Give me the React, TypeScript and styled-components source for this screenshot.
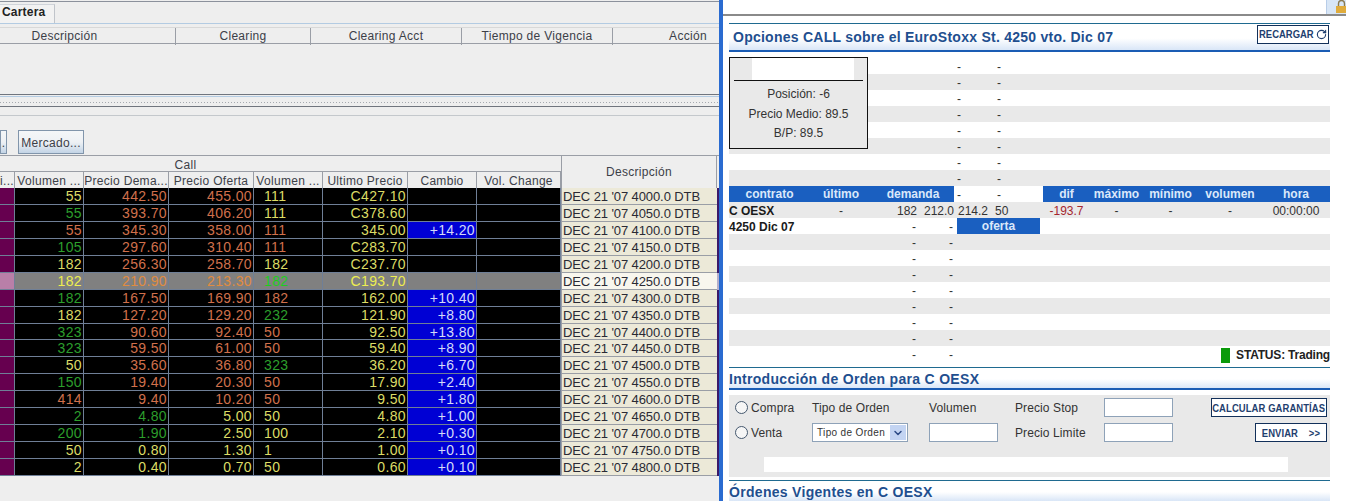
import { FC } from "react";
import styled, { createGlobalStyle } from "styled-components";
import { ChevronDown, RotateCw } from "lucide-react";

const GlobalStyle = createGlobalStyle`
  html, body {
    margin: 0;
    padding: 0;
    background: #ffffff;
    overflow: hidden;
  }
  * {
    box-sizing: border-box;
  }
`;

const COLORS = {
  y: "#dcdc66",
  g: "#2c9e2c",
  o: "#d0704c",
};

const SELECTED_COLORS = {
  y: "#eeee50",
  g: "#1ecc1e",
  o: "#e08c40",
};

type Tone = keyof typeof COLORS;

type Quote = {
  bidVol: [string, Tone];
  bid: [string, Tone];
  ask: [string, Tone];
  askVol: [string, Tone];
  last: string;
  change?: string;
  strike: string;
  selected?: boolean;
};

const quotes: Quote[] = [
  { bidVol: ["55", "y"], bid: ["442.50", "o"], ask: ["455.00", "o"], askVol: ["111", "y"], last: "C427.10", strike: "4000.0" },
  { bidVol: ["55", "g"], bid: ["393.70", "o"], ask: ["406.20", "o"], askVol: ["111", "y"], last: "C378.60", strike: "4050.0" },
  { bidVol: ["55", "o"], bid: ["345.30", "o"], ask: ["358.00", "o"], askVol: ["111", "o"], last: "345.00", change: "+14.20", strike: "4100.0" },
  { bidVol: ["105", "g"], bid: ["297.60", "o"], ask: ["310.40", "o"], askVol: ["111", "o"], last: "C283.70", strike: "4150.0" },
  { bidVol: ["182", "y"], bid: ["256.30", "o"], ask: ["258.70", "o"], askVol: ["182", "y"], last: "C237.70", strike: "4200.0" },
  { bidVol: ["182", "y"], bid: ["210.90", "o"], ask: ["213.30", "o"], askVol: ["182", "g"], last: "C193.70", strike: "4250.0", selected: true },
  { bidVol: ["182", "g"], bid: ["167.50", "o"], ask: ["169.90", "o"], askVol: ["182", "o"], last: "162.00", change: "+10.40", strike: "4300.0" },
  { bidVol: ["182", "y"], bid: ["127.20", "o"], ask: ["129.20", "o"], askVol: ["232", "g"], last: "121.90", change: "+8.80", strike: "4350.0" },
  { bidVol: ["323", "g"], bid: ["90.60", "o"], ask: ["92.40", "o"], askVol: ["50", "o"], last: "92.50", change: "+13.80", strike: "4400.0" },
  { bidVol: ["323", "g"], bid: ["59.50", "o"], ask: ["61.00", "o"], askVol: ["50", "o"], last: "59.40", change: "+8.90", strike: "4450.0" },
  { bidVol: ["50", "y"], bid: ["35.60", "o"], ask: ["36.80", "o"], askVol: ["323", "g"], last: "36.20", change: "+6.70", strike: "4500.0" },
  { bidVol: ["150", "g"], bid: ["19.40", "o"], ask: ["20.30", "o"], askVol: ["50", "o"], last: "17.90", change: "+2.40", strike: "4550.0" },
  { bidVol: ["414", "o"], bid: ["9.40", "o"], ask: ["10.20", "o"], askVol: ["50", "o"], last: "9.50", change: "+1.80", strike: "4600.0" },
  { bidVol: ["2", "g"], bid: ["4.80", "g"], ask: ["5.00", "y"], askVol: ["50", "y"], last: "4.80", change: "+1.00", strike: "4650.0" },
  { bidVol: ["200", "g"], bid: ["1.90", "g"], ask: ["2.50", "y"], askVol: ["100", "y"], last: "2.10", change: "+0.30", strike: "4700.0" },
  { bidVol: ["50", "y"], bid: ["0.80", "y"], ask: ["1.30", "y"], askVol: ["1", "y"], last: "1.00", change: "+0.10", strike: "4750.0" },
  { bidVol: ["2", "y"], bid: ["0.40", "y"], ask: ["0.70", "y"], askVol: ["50", "y"], last: "0.60", change: "+0.10", strike: "4800.0" },
];

const toneOf = (q: Quote, tone: Tone) =>
  q.selected ? SELECTED_COLORS[tone] : COLORS[tone];

const TABLE_COLUMNS = "15px 69px 85px 85px 69px 85px 69px 84px 156px 2px";

const Page = styled.div`
  width: 1346px;
  height: 501px;
  display: flex;
  overflow: hidden;
  font-family: "Liberation Sans", Arial, sans-serif;
`;

/* left: java client */

const JavaPane = styled.div`
  width: 719px;
  height: 501px;
  flex: none;
  background: #eeeeee;
  color: #3c4048;
  display: flex;
  flex-direction: column;
`;

const TabStrip = styled.div`
  height: 23px;
  margin-top: 1px;
  padding-top: 2px;
  border-top: 1px solid #8b919c;
  border-bottom: 1px solid #b3cbe2;
  display: flex;
  align-items: flex-end;
`;

const Tab = styled.div`
  width: 55px;
  height: 19px;
  padding: 0 0 0 2px;
  font-size: 12px;
  font-weight: bold;
  letter-spacing: 0.2px;
  color: #222222;
  border-right: 1px solid #c0c4ca;
  border-top: 1px solid #d0d4da;
  background: #f2f2f2;
`;

const OrderHeader = styled.div`
  margin-top: 3px;
  height: 17px;
  display: grid;
  grid-template-columns: 176px 135px 151px 151px 106px;
  border-top: 1px solid #d8d8d8;
  border-bottom: 1px solid #9a9ea6;
`;

const OrderHeaderCell = styled.div<{ $padLeft?: number; $padRight?: number }>`
  font-size: 12px;
  letter-spacing: 0.3px;
  line-height: 17px;
  text-align: center;
  border-right: 1px solid #9a9ea6;
  padding-left: ${(props) => (props.$padLeft ?? 0) + "px"};
  padding-right: ${(props) => (props.$padRight ?? 0) + "px"};

  &:last-child {
    border-right: none;
  }
`;

const EmptyOrders = styled.div`
  height: 51px;
  border-bottom: 1px solid #70757e;
`;

const Splitter = styled.div`
  height: 11px;
  margin-top: 1px;
  border-top: 1px solid #b3cbe2;
  border-bottom: 1px solid #70757e;
  display: flex;
  align-items: center;
`;

const SplitterDots = styled.div`
  width: 100%;
  height: 1px;
  margin-top: 1px;
  background: repeating-linear-gradient(90deg, #a6aab0 0 1px, transparent 1px 3px);
`;

const ThinRule = styled.div`
  height: 1px;
  margin-top: 8px;
  background: #c4c8cc;
`;

const ButtonBar = styled.div`
  height: 40px;
  padding-top: 14px;
  border-bottom: 1px solid #9a9ea6;
  display: flex;
  gap: 11px;
`;

const JavaButton = styled.div<{ width: number }>`
  width: ${(props) => props.width + "px"};
  height: 24px;
  font-size: 12px;
  letter-spacing: 0.3px;
  line-height: 24px;
  text-align: center;
  white-space: nowrap;
  overflow: hidden;
  color: #3c4048;
  border: 1px solid #8195ab;
  background: linear-gradient(#f4f6f8 0%, #eef1f4 50%, #c3d4e6 100%);
`;

const QuoteTable = styled.div`
  display: flex;
  flex-direction: column;
`;

const HeaderGrid = styled.div`
  height: 32px;
  display: grid;
  grid-template-columns: ${TABLE_COLUMNS};
  grid-template-rows: 16px 16px;
`;

const CallHeader = styled.div`
  grid-column: 1 / 9;
  grid-row: 1;
  font-size: 12px;
  letter-spacing: 0.3px;
  line-height: 18px;
  text-align: center;
  padding-right: 190px;
  border-bottom: 1px solid #9a9ea6;
`;

const ColumnHead = styled.div`
  grid-row: 2;
  font-size: 12px;
  letter-spacing: 0.3px;
  line-height: 18px;
  text-align: center;
  white-space: nowrap;
  overflow: hidden;
  border-right: 1px solid #9a9ea6;
`;

const DescriptionHead = styled.div`
  grid-column: 9;
  grid-row: 1 / 3;
  font-size: 12px;
  letter-spacing: 0.3px;
  line-height: 33px;
  text-align: center;
  border-left: 1px solid #9a9ea6;
  border-right: 1px solid #9a9ea6;
`;

const QuoteBody = styled.div`
  height: 288px;
  display: grid;
  grid-template-rows: repeat(17, 1fr);
`;

const QuoteRow = styled.div`
  display: grid;
  grid-template-columns: ${TABLE_COLUMNS};
  min-height: 0;
`;

const Cell = styled.div<{ $selected?: boolean }>`
  background: ${(props) => (props.$selected ? "#808080" : "#000000")};
  border-right: 1px solid #6f7f97;
  border-bottom: 1px solid #6f7f97;
  font-size: 14px;
  line-height: 17px;
  letter-spacing: 0.35px;
  min-width: 0;
  overflow: hidden;
  white-space: nowrap;
`;

const NumberCell = styled(Cell)<{ tone: string }>`
  color: ${(props) => props.tone};
  text-align: right;
  padding-right: 1px;
`;

const LeftNumberCell = styled(Cell)<{ tone: string }>`
  color: ${(props) => props.tone};
  padding-left: 10px;
`;

const MarkerCell = styled(Cell)`
  background: ${(props) => (props.$selected ? "#b97fa8" : "#66004f")};
`;

const ChangeCell = styled(Cell)<{ $active: boolean }>`
  background: ${(props) =>
    props.$active ? "#0000d4" : props.$selected ? "#808080" : "#000000"};
  color: #d4daf8;
  text-align: right;
  padding-right: 1px;
`;

const DescriptionCell = styled.div<{ $selected?: boolean }>`
  background: ${(props) => (props.$selected ? "#f8f6ee" : "#ece9d8")};
  color: #2a2a34;
  font-size: 13px;
  line-height: 17px;
  letter-spacing: -0.1px;
  padding-left: 1px;
  border-left: 1px solid #9a9ea6;
  border-bottom: 1px solid #9a9ea6;
  white-space: nowrap;
  overflow: hidden;
`;

const EdgeCell = styled.div<{ $selected?: boolean }>`
  background: ${(props) => (props.$selected ? "#b4aecb" : "#3b1a6a")};
`;

const PaneDivider = styled.div`
  width: 4px;
  flex: none;
  background: #2a6bd0;
`;

/* right: web frame */

const WebPane = styled.div`
  flex: 1;
  height: 501px;
  background: #ffffff;
  position: relative;
  color: #222222;
  font-size: 12px;
`;

const TopStrip = styled.div`
  height: 16px;
  display: flex;
  border-bottom: 2px solid #8a8a8a;
`;

const TopField = styled.div`
  flex: 1;
  background: #ffffff;
`;

const LockSlot = styled.div`
  width: 20px;
  padding-left: 9px;
  background: #d8e6f6;
  border-left: 1px solid #b8cde8;
`;

const WebBody = styled.div`
  margin-left: 6px;
  width: 601px;
  display: flex;
  flex-direction: column;
`;

const SectionHead = styled.div<{ top: number; height: number }>`
  margin-top: ${(props) => props.top + "px"};
  height: ${(props) => props.height + "px"};
  border-top: 1px solid #1f6a90;
  background: linear-gradient(#ffffff 55%, #d9e6f7 100%);
  display: flex;
  align-items: center;
  justify-content: space-between;
`;

const BlueRule = styled.div`
  height: 2px;
  background: #1a5cb4;
`;

const SectionTitle = styled.h2<{ indent: number; spacing: number; drop?: number }>`
  margin: 0;
  padding-left: ${(props) => props.indent + "px"};
  padding-top: ${(props) => (props.drop ?? 0) + "px"};
  font-size: 14px;
  font-weight: bold;
  letter-spacing: ${(props) => props.spacing + "px"};
  color: #1f4f8f;
  white-space: nowrap;
`;

const OutlineButton = styled.div<{ width: number; height: number }>`
  width: ${(props) => props.width + "px"};
  height: ${(props) => props.height + "px"};
  flex: none;
  background: #ffffff;
  border: 1px solid #12305a;
  color: #1f3f6f;
  font-size: 11px;
  font-weight: bold;
  display: flex;
  align-items: center;
  justify-content: center;
  gap: 2px;
  white-space: nowrap;
`;

const NarrowLabel = styled.span`
  display: inline-block;
  transform: scaleX(0.86);
`;

const ReloadLabel = styled(NarrowLabel)`
  transform-origin: left center;
  margin-right: -8px;
`;

const ReloadButton = styled(OutlineButton)`
  margin: 0 1px 6px 0;
`;

const MarketTable = styled.div`
  margin-top: 6px;
  position: relative;
  display: flex;
  flex-direction: column;
`;

const MarketRow = styled.div<{ $shaded: boolean }>`
  height: 16px;
  display: grid;
  grid-template-columns: 81px 62px 46px 36px 36px 53px 47px 53px 55px 64px 68px;
  background: ${(props) => (props.$shaded ? "#e9e9e9" : "transparent")};
  line-height: 18px;
  color: #333333;
  white-space: nowrap;
`;

const Val = styled.div<{ align: "left" | "center" | "right"; col: number; pad?: number }>`
  grid-column: ${(props) => props.col};
  text-align: ${(props) => props.align};
  padding-left: ${(props) => (props.align === "left" ? props.pad ?? 0 : 0) + "px"};
  padding-right: ${(props) => (props.align === "right" ? props.pad ?? 0 : 0) + "px"};
`;

const RedVal = styled(Val)`
  color: #a5262e;
`;

const BoldVal = styled(Val)`
  font-weight: bold;
  color: #1a1a1a;
`;

const BlueHead = styled.div<{ col: string }>`
  grid-column: ${(props) => props.col};
  background: #1a5fc0;
  color: #dbe8fa;
  font-weight: bold;
  text-align: center;
  line-height: 16px;
`;

const OfferHead = styled(BlueHead)`
  margin: 0 3px;
`;

const Status = styled.div`
  grid-column: 8 / -1;
  display: flex;
  justify-content: flex-end;
  align-items: center;
  gap: 6px;
  font-weight: bold;
  letter-spacing: -0.2px;
  color: #222222;
`;

const StatusLight = styled.span`
  width: 9px;
  height: 15px;
  background: #0a9a0a;
`;

const PositionBox = styled.div`
  position: absolute;
  left: 0;
  top: -1px;
  width: 139px;
  height: 92px;
  background: #e9e9e9;
  border: 1px solid #111111;
  padding: 0 4px;
  text-align: center;
  color: #333333;
`;

const PositionBlank = styled.div`
  height: 22px;
  margin: 0 9px 0 18px;
  background: #ffffff;
`;

const PositionRule = styled.div`
  height: 1px;
  background: #111111;
  margin-bottom: 4px;
`;

const PositionLine = styled.div`
  line-height: 19.5px;
`;

const OrderForm = styled.div`
  margin-top: 5px;
  height: 82px;
  background: #e9e9e9;
  display: flex;
  flex-direction: column;
`;

const FormRow = styled.div`
  height: 25px;
  display: grid;
  grid-template-columns: 83px 117px 86px 89px 107px 1fr;
  align-items: center;
  color: #333333;
  letter-spacing: 0.1px;
  white-space: nowrap;
`;

const RadioLabel = styled.label`
  display: flex;
  align-items: center;
  gap: 3px;
  padding-left: 6px;
`;

const Radio = styled.input.attrs({ type: "radio" })`
  appearance: none;
  width: 13px;
  height: 13px;
  margin: 0;
  border: 1px solid #45586e;
  border-radius: 50%;
  background: #f6f6f6;
`;

const TextField = styled.input.attrs({ type: "text" })`
  width: 69px;
  height: 19px;
  padding: 0;
  border: 1px solid #8ea2b8;
  background: #ffffff;
`;

const FakeSelect = styled.div`
  width: 96px;
  height: 19px;
  border: 1px solid #8ea2b8;
  background: #ffffff;
  display: flex;
  align-items: center;
  justify-content: space-between;
  font-size: 10px;
  letter-spacing: 0.35px;
  padding: 0 1px 0 4px;
  color: #333333;
`;

const SelectArrow = styled.span`
  width: 16px;
  height: 15px;
  display: flex;
  align-items: center;
  justify-content: center;
  background: #c3d4f2;
  color: #2c4a86;
`;

const ActionCell = styled.div`
  display: flex;
  justify-content: flex-end;
  padding-right: 3px;
`;

const MessageBand = styled.div`
  margin: 12px 42px 0 35px;
  height: 15px;
  background: #ffffff;
`;

const OptionHeadRow: FC = () => (
  <MarketRow $shaded={false}>
    <BlueHead col="1">contrato</BlueHead>
    <BlueHead col="2">último</BlueHead>
    <BlueHead col="3 / 5">demanda</BlueHead>
    <Val align="left" col={5} pad={3}>-</Val>
    <Val align="left" col={6} pad={7}>-</Val>
    <BlueHead col="7">dif</BlueHead>
    <BlueHead col="8">máximo</BlueHead>
    <BlueHead col="9">mínimo</BlueHead>
    <BlueHead col="10">volumen</BlueHead>
    <BlueHead col="11">hora</BlueHead>
  </MarketRow>
);

const App: FC = () => {
  const topRows = [0, 1, 2, 3, 4, 5, 6, 7];
  const lowerRows = [11, 12, 13, 14, 15, 16, 17];

  return (
    <Page>
      <GlobalStyle />
      <JavaPane>
        <TabStrip>
          <Tab>Cartera</Tab>
        </TabStrip>
        <OrderHeader>
          <OrderHeaderCell $padRight={46}>Descripción</OrderHeaderCell>
          <OrderHeaderCell>Clearing</OrderHeaderCell>
          <OrderHeaderCell>Clearing Acct</OrderHeaderCell>
          <OrderHeaderCell>Tiempo de Vigencia</OrderHeaderCell>
          <OrderHeaderCell $padLeft={44}>Acción</OrderHeaderCell>
        </OrderHeader>
        <EmptyOrders />
        <Splitter>
          <SplitterDots />
        </Splitter>
        <ThinRule />
        <ButtonBar>
          <JavaButton width={7}>.</JavaButton>
          <JavaButton width={66}>Mercado...</JavaButton>
        </ButtonBar>
        <QuoteTable>
          <HeaderGrid>
            <CallHeader>Call</CallHeader>
            <ColumnHead>i...</ColumnHead>
            <ColumnHead>Volumen ...</ColumnHead>
            <ColumnHead>Precio Dema...</ColumnHead>
            <ColumnHead>Precio Oferta</ColumnHead>
            <ColumnHead>Volumen ...</ColumnHead>
            <ColumnHead>Ultimo Precio</ColumnHead>
            <ColumnHead>Cambio</ColumnHead>
            <ColumnHead>Vol. Change</ColumnHead>
            <DescriptionHead>Descripción</DescriptionHead>
          </HeaderGrid>
          <QuoteBody>
            {quotes.map((q) => (
              <QuoteRow key={q.strike}>
                <MarkerCell $selected={q.selected} />
                <NumberCell $selected={q.selected} tone={toneOf(q, q.bidVol[1])}>{q.bidVol[0]}</NumberCell>
                <NumberCell $selected={q.selected} tone={toneOf(q, q.bid[1])}>{q.bid[0]}</NumberCell>
                <NumberCell $selected={q.selected} tone={toneOf(q, q.ask[1])}>{q.ask[0]}</NumberCell>
                <LeftNumberCell $selected={q.selected} tone={toneOf(q, q.askVol[1])}>{q.askVol[0]}</LeftNumberCell>
                <NumberCell $selected={q.selected} tone={toneOf(q, "y")}>{q.last}</NumberCell>
                <ChangeCell $selected={q.selected} $active={!!q.change}>{q.change}</ChangeCell>
                <Cell $selected={q.selected} />
                <DescriptionCell $selected={q.selected}>DEC 21 '07 {q.strike} DTB</DescriptionCell>
                <EdgeCell $selected={q.selected} />
              </QuoteRow>
            ))}
          </QuoteBody>
        </QuoteTable>
      </JavaPane>
      <PaneDivider />
      <WebPane>
        <TopStrip>
          <TopField />
          <LockSlot>
            <svg width="11" height="13" viewBox="0 0 11 13">
              <path d="M2.5 6V3.5a3 3 0 0 1 6 0V6" fill="none" stroke="#8a7a50" strokeWidth="1.4" />
              <rect x="0" y="6" width="11" height="7" fill="#e0ac3c" />
            </svg>
          </LockSlot>
        </TopStrip>
        <WebBody>
          <SectionHead top={7} height={27}>
            <SectionTitle indent={4} spacing={0.25}>Opciones CALL sobre el EuroStoxx St. 4250 vto. Dic 07</SectionTitle>
            <ReloadButton width={72} height={19}>
              <ReloadLabel>RECARGAR</ReloadLabel>
              <RotateCw size={11} strokeWidth={2.5} />
            </ReloadButton>
          </SectionHead>
          <BlueRule />
          <MarketTable>
            {topRows.map((i) => (
              <MarketRow key={i} $shaded={i % 2 === 1}>
                <Val align="left" col={5} pad={3}>-</Val>
                <Val align="left" col={6} pad={7}>-</Val>
              </MarketRow>
            ))}
            <OptionHeadRow />
            <MarketRow $shaded>
              <BoldVal align="left" col={1}>C OESX</BoldVal>
              <Val align="center" col={2}>-</Val>
              <Val align="right" col={3} pad={1}>182</Val>
              <Val align="right" col={4}>212.0</Val>
              <Val align="left" col={5} pad={4}>214.2</Val>
              <Val align="left" col={6} pad={5}>50</Val>
              <RedVal align="center" col={7}>-193.7</RedVal>
              <Val align="center" col={8}>-</Val>
              <Val align="center" col={9}>-</Val>
              <Val align="center" col={10}>-</Val>
              <Val align="center" col={11}>00:00:00</Val>
            </MarketRow>
            <MarketRow $shaded={false}>
              <BoldVal align="left" col={1}>4250 Dic 07</BoldVal>
              <Val align="right" col={3} pad={2}>-</Val>
              <Val align="right" col={4} pad={1}>-</Val>
              <OfferHead col="5 / 7">oferta</OfferHead>
            </MarketRow>
            {lowerRows.map((i) => (
              <MarketRow key={i} $shaded={i % 2 === 1}>
                <Val align="right" col={3} pad={2}>-</Val>
                <Val align="right" col={4} pad={1}>-</Val>
              </MarketRow>
            ))}
            <MarketRow $shaded={false}>
              <Val align="right" col={3} pad={2}>-</Val>
              <Val align="right" col={4} pad={1}>-</Val>
              <Status>
                <StatusLight />
                STATUS: Trading
              </Status>
            </MarketRow>
            <PositionBox>
              <PositionBlank />
              <PositionRule />
              <PositionLine>Posición: -6</PositionLine>
              <PositionLine>Precio Medio: 89.5</PositionLine>
              <PositionLine>B/P: 89.5</PositionLine>
            </PositionBox>
          </MarketTable>
          <SectionHead top={5} height={21}>
            <SectionTitle indent={0} spacing={0.3} drop={2}>Introducción de Orden para C OESX</SectionTitle>
          </SectionHead>
          <BlueRule />
          <OrderForm>
            <FormRow>
              <RadioLabel>
                <Radio name="side" />
                Compra
              </RadioLabel>
              <span>Tipo de Orden</span>
              <span>Volumen</span>
              <span>Precio Stop</span>
              <TextField />
              <ActionCell>
                <OutlineButton width={116} height={19}>
                  <NarrowLabel>CALCULAR GARANTÍAS</NarrowLabel>
                </OutlineButton>
              </ActionCell>
            </FormRow>
            <FormRow>
              <RadioLabel>
                <Radio name="side" />
                Venta
              </RadioLabel>
              <FakeSelect>
                Tipo de Orden
                <SelectArrow>
                  <ChevronDown size={12} strokeWidth={3} />
                </SelectArrow>
              </FakeSelect>
              <TextField />
              <span>Precio Limite</span>
              <TextField />
              <ActionCell>
                <OutlineButton width={72} height={19}>
                  <NarrowLabel>ENVIAR &nbsp; &nbsp;&gt;&gt;</NarrowLabel>
                </OutlineButton>
              </ActionCell>
            </FormRow>
            <MessageBand />
          </OrderForm>
          <SectionHead top={3} height={21}>
            <SectionTitle indent={0} spacing={0.3} drop={2}>Órdenes Vigentes en C OESX</SectionTitle>
          </SectionHead>
        </WebBody>
      </WebPane>
    </Page>
  );
};

export default App;
